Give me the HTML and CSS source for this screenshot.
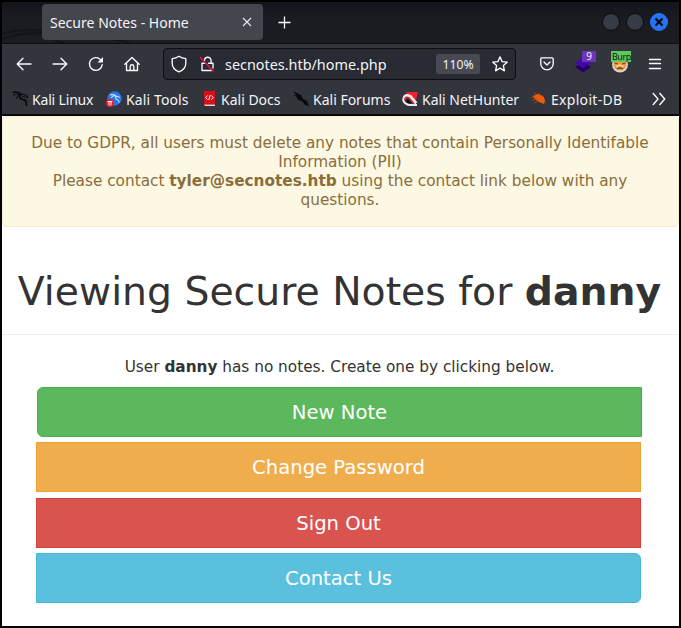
FILE: index.html
```html
<!DOCTYPE html>
<html lang="en">
<head>
<meta charset="utf-8">
<title>Secure Notes - Home</title>
<link rel="stylesheet" href="styles.css">
</head>
<body>
<div class="window">
  <header class="titlebar">
    <svg class="titlebar-art" width="130" height="16" viewBox="0 0 130 16" fill="none" stroke="#131418" stroke-width="2"><path d="M0 7Q20 1 42 4M0 12Q20 5 44 6Q54 16 64 16M44 5Q90 6 128 16"/></svg>
    <div class="tab"><span class="tab-title">Secure Notes - Home</span>
      <svg width="10" height="10" viewBox="0 0 10 10" fill="none" stroke="#e8e8ea" stroke-width="1.1"><path d="M1 1L9 9M9 1L1 9"/></svg>
    </div>
    <svg class="new-tab" width="13" height="13" viewBox="0 0 13 13" fill="none" stroke="#fff" stroke-width="1.3"><path d="M6.5 .5v12M.5 6.5h12"/></svg>
    <div class="controls">
      <span class="control"></span><span class="control"></span>
      <span class="control control-close"><svg width="10" height="10" viewBox="0 0 10 10" stroke="#08090c" stroke-width="2.2"><path d="M1.500 1.500L8.500 8.500M8.500 1.500L1.500 8.500"/></svg></span>
    </div>
  </header>

  <nav class="toolbar">
    <div class="nav-buttons">
      <svg width="16" height="16" viewBox="0 0 16 16"><path d="M15 8H1.500M7 2.200L1.200 8 7 13.800"/></svg>
      <svg width="16" height="16" viewBox="0 0 16 16"><path d="M1 8h13.500M9 2.200L14.800 8 9 13.800"/></svg>
      <svg width="16" height="16" viewBox="0 0 16 16"><path d="M14.200 8.700A6.400 6.400 0 1 1 12.500 3.600L14 5"/><path class="solid" d="M15 1v5.600H9.500z"/></svg>
      <svg width="16" height="16" viewBox="0 0 16 16"><path d="M.8 8.200L8 1.400l7.200 6.800M2.500 7v7.500h11V7M6.200 14.500v-4a1.800 1.800 0 0 1 3.600 0v4"/></svg>
    </div>
    <div class="address">
      <svg class="shield" width="16" height="18" viewBox="0 0 16 18"><path d="M8 1.200C6 2.700 3.500 3.500 1.200 3.700v4.500c0 4 2.800 7 6.800 8.600 4-1.600 6.800-4.600 6.800-8.600V3.700C12.500 3.500 10 2.700 8 1.200z"/></svg>
      <svg class="lock" width="16" height="18" viewBox="0 0 16 18"><path d="M5.500 5.500a3.300 3.300 0 0 1 6.600 0V8M5.500 8.200H3v7.300h9.500M9.500 8.200H14V13"/><path class="slash" d="M1.500 2.500L14 16"/></svg>
      <span class="url">secnotes.htb/home.php</span>
      <span class="zoom">110%</span>
      <svg class="star" width="16" height="16" viewBox="0 0 16 16"><path d="M8 .9l2.100 4.700 5.100.6-3.800 3.400 1 5.200L8 12.200l-4.400 2.600 1-5.200L.8 6.200l5.100-.6z"/></svg>
    </div>
    <div class="extensions">
      <svg width="14" height="14" viewBox="0 0 14 14"><path d="M2 .8h10q1.200 0 1.200 1.200v4.700a6.200 6.200 0 0 1-12.400 0V2Q.8.8 2 .8z"/><path d="M4 5l3 2.900L10 5"/></svg>
      <span class="extension">
        <svg class="no-line" width="16" height="18" viewBox="0 0 16 18"><path fill="#23006b" d="M0 12l8-5 8 5-8 5.500z"/><path fill="#4508a8" d="M0 7.500l8-5.500 8 5.500-8 5.500z"/></svg>
        <span class="badge badge-count">9</span>
      </span>
      <span class="extension">
        <svg class="no-line" width="18" height="18" viewBox="0 0 18 18"><circle cx="9" cy="9.500" r="8" fill="#d8d5cd"/><circle cx="9" cy="9" r="6.500" fill="#ee9a42"/><path d="M3.500 8l3.500 1M14.500 8l-3.500 1M6 14q3-2 6 0" fill="none" stroke="#81431a" stroke-width="1.300"/><path d="M5 11.500l3.500-1.500 4 1.500" fill="none" stroke="#ffd49b" stroke-width="1.500"/></svg>
        <span class="badge badge-burp">Burp</span>
      </span>
      <svg class="menu" width="14" height="12" viewBox="0 0 14 12"><path d="M1.500 1.500h11M1.500 5.500h11M1.500 10.500h11"/></svg>
    </div>
  </nav>

  <nav class="bookmarks">
    <a class="bm bm-linux"><svg width="17" height="16" viewBox="0 0 17 16" fill="none" stroke="#08090b"><path stroke-width="1.700" d="M.5 1.500Q5 0 9 3L7.500 6Q8 8 11 8.500 14.500 9 14.500 15"/><path d="M1 4.500Q4 1.500 8 4M4 8Q5 4 8 4M9 3l5 1 2 2.500-6-1M10 8.500q4-1 5.500 2"/></svg>Kali Linux</a>
    <a class="bm bm-tools"><svg width="16" height="16" viewBox="0 0 16 16"><circle cx="8.500" cy="7.500" r="7.200" fill="#2876ee"/><path fill="none" stroke="#c9e2ff" stroke-width="1.200" d="M4 4q3-1 6 1l4 1.500M5 7q2-3 5-2-1 3 1 3.500 2 .5 2 3"/><circle cx="4" cy="12" r="4" fill="#ed1b28"/><path stroke="#fff" stroke-width="1" d="M1.700 10.500h4.600M3 10.500v4M5 10.500v4"/></svg>Kali Tools</a>
    <a class="bm bm-docs"><svg width="13" height="16" viewBox="0 0 13 16"><path fill="#9d0610" d="M1 1l11-1v15l-10 1-2-1z"/><path fill="#d80e18" d="M1 0h11v13H1z"/><path fill="#d8d8dc" d="M1 13.500h11V15H2z"/><path d="M4.500 4.500L2.800 6.500l1.700 2M8.500 4.500l1.700 2-1.700 2M7.200 4L5.800 9" stroke="#fff" fill="none"/></svg>Kali Docs</a>
    <a class="bm bm-forums"><svg width="16" height="16" viewBox="0 0 16 16"><path fill="#08090b" d="M0 0l8 4 2 4 4 2 2 5-4-1-3-4-4-1-2-4L0 4l3 0z"/></svg>Kali Forums</a>
    <a class="bm bm-hunter"><svg width="16" height="16" viewBox="0 0 16 16"><path fill="#f51d32" d="M3 1h13L14 9z"/><path fill="none" stroke="#f1e8e9" stroke-width="3.500" d="M2 8Q3 3 8 5.500l6 7"/><path fill="none" stroke="#eee" stroke-width="2" d="M1 8q1 6 8 6h6"/><path fill="none" stroke="#d61d31" stroke-width="1.600" d="M3 9q0-4 4-2l5 6"/><path fill="#101115" d="M4 10l2-2 4 4.500H6z"/></svg>Kali NetHunter</a>
    <a class="bm bm-exploit"><svg width="16" height="14" viewBox="0 0 16 14"><path d="M0 5l5 1M1 8l6-1M3 1l5 3M3 11l5-3M7 1l3 3M12 9l3 2" stroke="#9b4319"/><path fill="#ee5b0b" d="M2 4l5-2 5 2 2 4-1 4-5-2-4-3z"/></svg>Exploit-DB</a>
    <svg class="more" width="14" height="14" viewBox="0 0 14 14" fill="none" stroke="#fbfbfe" stroke-width="1.400"><path d="M.8 1L6 7 .8 13M7.500 1l5.200 6-5.200 6"/></svg>
  </nav>

  <main class="page">
    <div class="alert">Due to GDPR, all users must delete any notes that contain Personally Identifable Information (PII)<br>Please contact <strong>tyler@secnotes.htb</strong> using the contact link below with any questions.</div>
    <h1>Viewing Secure Notes for <b>danny</b></h1>
    <p class="empty">User <b>danny</b> has no notes. Create one by clicking below.</p>
    <div class="actions">
      <a class="btn btn-new">New Note</a>
      <a class="btn btn-change">Change Password</a>
      <a class="btn btn-out">Sign Out</a>
      <a class="btn btn-contact">Contact Us</a>
    </div>
  </main>
</div>
</body>
</html>
```
FILE: styles.css
```css
* { box-sizing: border-box; }
body { margin: 0; background: #000; }
.window { width: 681px; height: 628px; padding: 2px 2px 0; border-bottom: 2px solid #000; font: 14px "Noto Sans", sans-serif; color: #f3f3f6; overflow: hidden; }
svg { display: block; flex: none; }

.titlebar { position: relative; height: 42px; display: flex; align-items: flex-start; padding: 2px 11px 0 40px; background: linear-gradient(#14151a, #1b1c21 45%, #1b1c21); border-bottom: 1px solid #0c0d10; }
.titlebar-art { position: absolute; left: 0; bottom: 0; }
.tab { position: relative; width: 221px; height: 36px; display: flex; align-items: center; justify-content: space-between; padding: 0 11px 0 8px; border-radius: 4px; background: #44464d; }
.tab-title { letter-spacing: .02px; }
.new-tab { margin: 12px 0 0 15px; }
.controls { display: flex; gap: 6px; margin: 9px 0 0 auto; }
.control { width: 18px; height: 18px; border-radius: 50%; background: #373b47; border: 1px solid #08090c; }
.control-close { display: grid; place-items: center; background: #2674f5; border-color: #2674f5; }

.toolbar { height: 40px; display: flex; align-items: center; background: #33353d; }
.toolbar svg:not(.no-line) { fill: none; stroke: #fbfbfe; stroke-width: 1.35; stroke-linejoin: round; stroke-linecap: round; }
.toolbar .solid { fill: #fbfbfe; stroke: none; }
.toolbar .slash { stroke: #e01749; stroke-width: 1.6; }
.nav-buttons { width: 161px; display: flex; gap: 20px; padding-left: 14px; }
.address { width: 353px; height: 32px; display: flex; align-items: center; padding: 0 7px; background: #282a34; border: 1px solid #0d0e12; border-radius: 4px; }
.lock { margin: 0 10px 0 12px; }
.url { width: 211px; font-size: 14.4px; }
.zoom { width: 44px; height: 20px; border-radius: 3px; background: #484a53; font-size: 12.2px; line-height: 21px; text-align: center; }
.star { margin-left: 12px; }
.extensions { flex: 1; display: flex; align-items: center; padding-left: 24px; }
.extension { position: relative; margin-left: 21px; }
.extension + .extension { margin-left: 20px; }
.menu { margin-left: 19px; }
.badge { position: absolute; height: 11px; font-size: 10px; line-height: 11px; white-space: nowrap; }
.badge-count { left: 7px; top: -4px; width: 14px; background: #6d35bf; text-align: center; }
.badge-burp { left: 0; top: -4px; width: 20px; padding-left: 1px; background: #5ec85d; color: #132514; font-size: 9px; letter-spacing: -.5px; }

.bookmarks { height: 32px; display: flex; align-items: center; padding: 0 0 0 10px; background: #33353d; border-bottom: 2px solid #08080d; white-space: nowrap; }
.bm { display: flex; align-items: center; }
.bm svg { margin-right: 4px; }
.bm-linux { width: 94px; letter-spacing: -.17px; }
.bm-linux svg { margin-right: 3px; }
.bm-tools { width: 97px; letter-spacing: .12px; }
.bm-docs { width: 90px; }
.bm-docs svg { margin-right: 5px; }
.bm-forums { width: 109px; }
.bm-hunter { width: 129px; letter-spacing: -.02px; }
.bm-exploit { width: 121px; letter-spacing: .3px; }

.page { height: 510px; background: #fff; color: #333; font-family: "DejaVu Sans", sans-serif; font-size: 15.3px; line-height: 19px; }
.alert { height: 111px; padding: 17px 18px 0 17px; background: #fcf8e3; border: 1px solid #faebcc; border-radius: 4px; color: #8a6d3b; text-align: center; }
h1 { height: 108px; margin: 0; padding: 42px 2px 0 0; border-bottom: 1px solid #eee; font-size: 39.35px; line-height: 44px; font-weight: 400; text-align: center; white-space: nowrap; }
.empty { margin: 0; height: 52px; padding: 23px 2px 0 0; text-align: center; }
.actions { margin-left: 34px; }
.btn { display: block; width: 605px; height: 50px; margin-bottom: 5px; padding-top: 1px; border: 1px solid; color: #fff; font-size: 19.6px; line-height: 48px; text-align: center; }
.btn-new { margin-left: 1px; background: #5cb85c; border-color: #4cae4c; border-radius: 6px 0 0 6px; }
.btn-change { margin-bottom: 6px; background: #f0ad4e; border-color: #eea236; }
.btn-out { background: #d9534f; border-color: #d43f3a; }
.btn-contact { background: #5bc0de; border-color: #46b8da; border-radius: 0 6px 6px 0; }
```
